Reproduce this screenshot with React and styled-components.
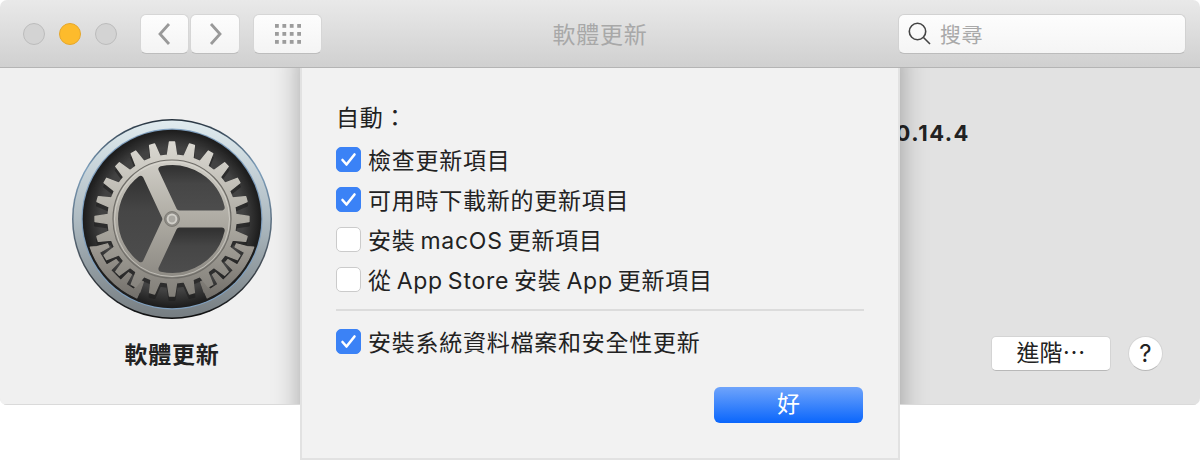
import React from 'react';
import styled, { createGlobalStyle } from 'styled-components';

const FONT = `Inter, "Noto Sans CJK TC", "Liberation Sans", sans-serif`;

const GlobalStyle = createGlobalStyle`
  html, body {
    margin: 0;
    padding: 0;
    background: #fff;
  }
  body {
    font-family: ${FONT};
    color: #222;
  }
`;

const Page = styled.div`
  position: relative;
  width: 1200px;
  height: 460px;
  overflow: hidden;
  background: #fff;
`;

const Window = styled.div`
  display: flex;
  flex-direction: column;
  height: 405px;
  border-radius: 7px;
  overflow: hidden;
`;

const TitleBar = styled.div`
  display: grid;
  grid-template-columns: 1fr auto 1fr;
  align-items: center;
  flex: none;
  box-sizing: border-box;
  height: 68px;
  padding: 0 14px 0 14px;
  background: linear-gradient(#e9e9e9, #d0d0d0);
  border-bottom: 1px solid #b4b4b4;
`;

const Controls = styled.div`
  display: flex;
  align-items: center;
  margin-left: 9px;
`;

const Light = styled.span`
  box-sizing: border-box;
  width: 22px;
  height: 22px;
  margin-right: 14px;
  border-radius: 50%;
  background: ${props => (props.active ? '#fdbb2c' : '#d3d3d3')};
  border: 1px solid ${props => (props.active ? '#e5a72c' : '#bcbcbc')};
`;

const ToolButton = styled.div`
  display: flex;
  align-items: center;
  justify-content: center;
  box-sizing: border-box;
  width: ${props => props.width}px;
  height: 40px;
  margin-left: ${props => props.gap || 0}px;
  border-radius: 6px;
  background: linear-gradient(#fdfdfd, #f4f4f4);
  border: 1px solid #d6d6d6;
  border-bottom-color: #bdbdbd;
`;

const Title = styled.div`
  padding-bottom: 2px;
  font-size: 23px;
  letter-spacing: 0.7px;
  color: #a8a8a8;
`;

const SearchBox = styled.div`
  justify-self: end;
  display: flex;
  align-items: center;
  box-sizing: border-box;
  width: 288px;
  height: 40px;
  padding-left: 8px;
  border-radius: 6px;
  background: linear-gradient(#fdfdfd, #f5f5f5);
  border: 1px solid #d2d2d2;
  border-bottom-color: #bcbcbc;
`;

const SearchText = styled.span`
  margin-left: 7px;
  padding-bottom: 2px;
  font-size: 21px;
  letter-spacing: 0.6px;
  color: #a9a9a9;
`;

const Body = styled.div`
  position: relative;
  display: flex;
  flex: 1;
  min-height: 0;
  overflow: hidden;
  background: #e2e2e2;
  border-bottom: 1px solid #dadada;
`;

const Sidebar = styled.div`
  display: flex;
  flex-direction: column;
  align-items: center;
  flex: none;
  width: 344px;
  padding-top: 49px;
  background: #f0f0f0;
`;

const SidebarLabel = styled.div`
  margin-top: 15px;
  font-size: 23px;
  font-weight: 700;
  letter-spacing: 0.7px;
  color: #222;
`;

const Main = styled.div`
  display: flex;
  flex-direction: column;
  flex: 1;
  padding: 52px 37px 33px 0;
`;

const Version = styled.div`
  align-self: flex-end;
  margin-right: 193px;
  font-size: 22px;
  font-weight: 700;
  letter-spacing: 1.5px;
  color: #222;
  white-space: nowrap;
`;

const Footer = styled.div`
  display: flex;
  align-items: center;
  justify-content: flex-end;
  margin-top: auto;
`;

const AdvancedButton = styled.div`
  box-sizing: border-box;
  width: 120px;
  height: 35px;
  line-height: 33px;
  text-align: center;
  font-size: 23px;
  border-radius: 5px;
  background: #fff;
  border: 1px solid #d4d4d4;
  border-bottom-color: #b8b8b8;
`;

const HelpButton = styled.div`
  box-sizing: border-box;
  width: 35px;
  height: 35px;
  margin-left: 17px;
  line-height: 33px;
  text-align: center;
  font-size: 24px;
  border-radius: 50%;
  background: #fff;
  border: 1px solid #d4d4d4;
  border-bottom-color: #b8b8b8;
`;

const DialogShadow = styled.div`
  position: absolute;
  top: -20px;
  left: 300px;
  width: 600px;
  height: 460px;
  box-shadow: 0 0 26px rgba(0, 0, 0, 0.32);
`;

const Dialog = styled.div`
  position: absolute;
  top: 68px;
  left: 300px;
  display: flex;
  flex-direction: column;
  box-sizing: border-box;
  width: 600px;
  height: 392px;
  padding: 30px 34px 0 34px;
  background: #f2f2f2;
  border: 2px solid #e2e2e2;
  border-top: 0;
`;

const Heading = styled.div`
  height: 40px;
  line-height: 40px;
  margin-bottom: 1px;
  font-size: 23px;
  letter-spacing: 0.8px;
`;

const Row = styled.div`
  display: flex;
  align-items: center;
  height: 40px;
  font-size: 23px;
  letter-spacing: 0.75px;
  word-spacing: -2.3px;
  color: #222;
  white-space: pre;
`;

const Checkbox = styled.span`
  display: flex;
  align-items: center;
  justify-content: center;
  flex: none;
  box-sizing: border-box;
  width: 25px;
  height: 25px;
  margin-right: 7px;
  border-radius: 5px;
  background: ${props => (props.checked ? '#3b82f6' : '#fff')};
  border: 1px solid ${props => (props.checked ? '#3b82f6' : '#cbcbcb')};
`;

const Divider = styled.div`
  height: 2px;
  margin: 10px 0 10px;
  background: #dcdcdc;
`;

const OkButton = styled.div`
  align-self: flex-end;
  width: 149px;
  height: 36px;
  margin: 26px 1px 0 0;
  line-height: 35px;
  text-align: center;
  font-size: 23px;
  color: #fff;
  border-radius: 6px;
  background: linear-gradient(#6fa4fb, #0a66fc);
`;

// screen angle in degrees, clockwise from +x
const polar = (r, deg) => {
  const a = (deg * Math.PI) / 180;
  return `${(r * Math.cos(a)).toFixed(2)} ${(r * Math.sin(a)).toFixed(2)}`;
};

const gearPath = () => {
  const parts = [];
  for (let i = 0; i < 24; i++) {
    const a = i * 15;
    parts.push(polar(64, a - 4.1), polar(77, a - 1.9), polar(77, a + 1.9), polar(64, a + 4.1));
  }
  return `M${parts.join(' L')} Z`;
};

const holePath = (a1, a2, w, r) => {
  const span = a2 - a1;
  const mid = (a1 + a2) / 2;
  const apex = w / Math.sin(((span / 2) * Math.PI) / 180);
  const off = (Math.asin(w / r) * 180) / Math.PI;
  return `M${polar(apex, mid)} L${polar(r, a1 + off)} A${r} ${r} 0 0 1 ${polar(r, a2 - off)} Z`;
};

// the two toothed arms at the bottom, teeth fall between the gear teeth
const rackPath = (start, dir) => {
  const outer = 86.5;
  const root = 80;
  const tip = 69;
  const angle = d => start + dir * d;
  const pts = [polar(root, angle(46))];
  [44, 32.5, 17.5, 2.5].forEach(t => {
    pts.push(polar(root, angle(t + 2.3)), polar(tip, angle(t + 1.5)), polar(tip, angle(t - 1.5)), polar(root, angle(t - 2.3)));
  });
  return `M${polar(outer, angle(-1))} A${outer} ${outer} 0 0 ${dir > 0 ? 1 : 0} ${polar(outer, angle(46))} L${pts.join(' L')} Z`;
};

const GEAR = gearPath();
const SPOKES = [0, 115, 245, 360];

const PrefsIcon = () => (
  <svg width="204" height="204" viewBox="-102 -102 204 204">
    <defs>
      <linearGradient id="ring" x1="0" y1="0" x2="0" y2="1">
        <stop offset="0" stopColor="#e0ebef" />
        <stop offset="0.5" stopColor="#aebbc2" />
        <stop offset="1" stopColor="#767d81" />
      </linearGradient>
      <linearGradient id="edge" x1="0" y1="0" x2="0" y2="1">
        <stop offset="0" stopColor="#25313c" />
        <stop offset="0.25" stopColor="#7d9fbc" />
        <stop offset="0.7" stopColor="#48525c" />
        <stop offset="1" stopColor="#0c0c0c" />
      </linearGradient>
      <radialGradient id="well" cx="0.5" cy="0.5" r="0.5">
        <stop offset="0" stopColor="#4c4c4b" />
        <stop offset="0.8" stopColor="#434343" />
        <stop offset="1" stopColor="#1b1b1b" />
      </radialGradient>
      <linearGradient id="steel" x1="0" y1="0" x2="0" y2="1">
        <stop offset="0" stopColor="#dbd9d2" />
        <stop offset="0.5" stopColor="#aeaba3" />
        <stop offset="1" stopColor="#827f79" />
      </linearGradient>
      <linearGradient id="rack" x1="0" y1="0" x2="0" y2="1">
        <stop offset="0" stopColor="#a09c95" />
        <stop offset="1" stopColor="#726f6a" />
      </linearGradient>
      <linearGradient id="hole" x1="0" y1="0" x2="0" y2="1">
        <stop offset="0" stopColor="#333" />
        <stop offset="0.4" stopColor="#464646" />
        <stop offset="1" stopColor="#4c4c4c" />
      </linearGradient>
    </defs>
    <circle r="100" fill="url(#edge)" />
    <circle r="98.5" fill="url(#ring)" />
    <circle r="90.5" fill="#7f9fbe" />
    <circle r="89.3" fill="url(#well)" />
    <path
      d={GEAR}
      transform="translate(0 4)"
      fill="#1c1c1c"
      stroke="#1c1c1c"
      strokeWidth="2"
      strokeLinejoin="round"
      opacity="0.55"
    />
    <g fill="url(#rack)" stroke="url(#rack)" strokeWidth="1.2" strokeLinejoin="round">
      <path d={rackPath(20, 1)} />
      <path d={rackPath(160, -1)} />
    </g>
    <path d={GEAR} fill="url(#steel)" stroke="url(#steel)" strokeWidth="1.4" strokeLinejoin="round" />
    <circle r="59" fill="none" stroke="#6f6d68" strokeWidth="1.2" />
    <circle r="57.5" fill="none" stroke="#e3e1da" strokeWidth="0.8" opacity="0.7" />
    {SPOKES.slice(0, 3).map((a, i) => (
      <path
        key={a}
        d={holePath(a, SPOKES[i + 1], 11.5, 51)}
        fill="url(#hole)"
        stroke="url(#hole)"
        strokeWidth="6"
        strokeLinejoin="round"
      />
    ))}
    <circle r="7.5" fill="#8d8b85" stroke="#77756f" strokeWidth="0.8" />
    <circle r="5.4" fill="#d0cec8" />
    <circle r="3.4" fill="#a9a7a1" />
  </svg>
);

const Chevron = ({ d }) => (
  <svg width="18" height="24" viewBox="0 0 18 24">
    <path d={d} fill="none" stroke="#999" strokeWidth="2.8" />
  </svg>
);

const GridIcon = () => (
  <svg width="26" height="20" viewBox="0 0 26 20" fill="#9c9c9c">
    {[0, 8, 16].map(y =>
      [0, 7.4, 14.8, 22.2].map(x => <rect key={`${x}-${y}`} x={x} y={y} width="3.8" height="3.8" />)
    )}
  </svg>
);

const SearchIcon = () => (
  <svg width="26" height="26" viewBox="0 0 26 26" fill="none" stroke="#444" strokeWidth="1.6">
    <circle cx="10.5" cy="10.5" r="8.2" />
    <path d="M16.5 16.5l6.5 6.5" />
  </svg>
);

const Tick = () => (
  <svg width="17" height="15" viewBox="0 0 17 15" fill="none" stroke="#fff" strokeWidth="2.6" strokeLinecap="round" strokeLinejoin="round">
    <path d="M2.5 8l4 4.5L14.5 2.5" />
  </svg>
);

const CheckRow = ({ checked, children }) => (
  <Row>
    <Checkbox checked={checked}>{checked && <Tick />}</Checkbox>
    {children}
  </Row>
);

export default function App() {
  return (
    <Page>
      <GlobalStyle />
      <Window>
        <TitleBar>
          <Controls>
            <Light />
            <Light active />
            <Light />
            <ToolButton width={49} gap={9}>
              <Chevron d="M13 2L4 12l9 10" />
            </ToolButton>
            <ToolButton width={50} gap={1}>
              <Chevron d="M5 2l9 10-9 10" />
            </ToolButton>
            <ToolButton width={69} gap={13}>
              <GridIcon />
            </ToolButton>
          </Controls>
          <Title>軟體更新</Title>
          <SearchBox>
            <SearchIcon />
            <SearchText>搜尋</SearchText>
          </SearchBox>
        </TitleBar>
        <Body>
          <Sidebar>
            <PrefsIcon />
            <SidebarLabel>軟體更新</SidebarLabel>
          </Sidebar>
          <Main>
            <Version>macOS 10.14.4</Version>
            <Footer>
              <AdvancedButton>進階⋯</AdvancedButton>
              <HelpButton>?</HelpButton>
            </Footer>
          </Main>
          <DialogShadow />
        </Body>
      </Window>
      <Dialog>
        <Heading>自動：</Heading>
        <CheckRow checked>檢查更新項目</CheckRow>
        <CheckRow checked>可用時下載新的更新項目</CheckRow>
        <CheckRow>安裝 macOS 更新項目</CheckRow>
        <CheckRow>從 App Store 安裝 App 更新項目</CheckRow>
        <Divider />
        <CheckRow checked>安裝系統資料檔案和安全性更新</CheckRow>
        <OkButton>好</OkButton>
      </Dialog>
    </Page>
  );
}
